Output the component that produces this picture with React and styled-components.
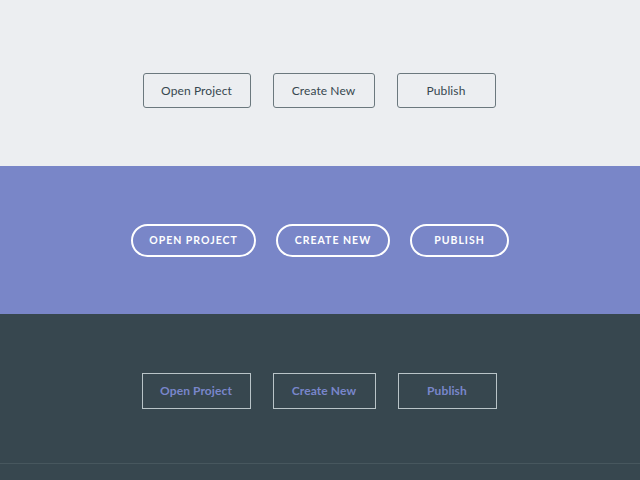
import React from 'react';
import styled, { createGlobalStyle, css } from 'styled-components';

const Global = createGlobalStyle`
  html, body { margin: 0; padding: 0; background: #37474f; }
  body { font-family: 'Lato', 'Open Sans', sans-serif; }
  * { box-sizing: border-box; }
`;

const Section = styled.section`
  height: ${({ h }) => h}px;
  display: flex;
  align-items: center;
  justify-content: center;
  background: ${({ bg }) => bg};
  border-bottom: ${({ line }) => (line ? '1px solid #47575e' : 'none')};
`;

const Row = styled.div`
  display: flex;
  align-items: center;
  gap: ${({ gap }) => gap}px;
  padding-top: ${({ offset }) => offset || 0}px;
  padding-right: ${({ shift }) => shift || 0}px;
`;

const Button = styled.button`
  font-family: 'Lato', 'Open Sans', sans-serif;
  background: transparent;
  cursor: pointer;
  width: ${({ w }) => w}px;
  white-space: nowrap;
  padding: 0;

  ${({ variant }) =>
    variant === 'light' &&
    css`
      height: 35px;
      border: 1px solid #6b787e;
      border-radius: 3px;
      color: #37474f;
      font-size: 12px;
      font-weight: 400;
      letter-spacing: 0.1px;
    `}

  ${({ variant }) =>
    variant === 'pill' &&
    css`
      height: 33px;
      border: 2px solid #ffffff;
      border-radius: 17px;
      color: #ffffff;
      font-size: 10.5px;
      font-weight: 700;
      letter-spacing: 1px;
      text-transform: uppercase;
    `}

  ${({ variant }) =>
    variant === 'dark' &&
    css`
      height: 36px;
      border: 1px solid #b9c4c8;
      border-radius: 0;
      color: #7986cb;
      font-size: 12px;
      font-weight: 700;
      letter-spacing: 0.1px;
    `}
`;

const labels = ['Open Project', 'Create New', 'Publish'];

const App = () => (
  <>
    <Global />
    <Section h={166} bg="#eceef1">
      <Row gap={22} offset={15} shift={2}>
        {labels.map((l, i) => (
          <Button key={l} variant="light" w={[108, 102, 99][i]}>{l}</Button>
        ))}
      </Row>
    </Section>
    <Section h={148} bg="#7986c8">
      <Row gap={20}>
        {labels.map((l, i) => (
          <Button key={l} variant="pill" w={[125, 114, 99][i]}>{l}</Button>
        ))}
      </Row>
    </Section>
    <Section h={150} bg="#37474f" line>
      <Row gap={22} offset={4} shift={2}>
        {labels.map((l, i) => (
          <Button key={l} variant="dark" w={[109, 103, 99][i]}>{l}</Button>
        ))}
      </Row>
    </Section>
    <Section h={17} bg="#37474f" />
  </>
);

export default App;
